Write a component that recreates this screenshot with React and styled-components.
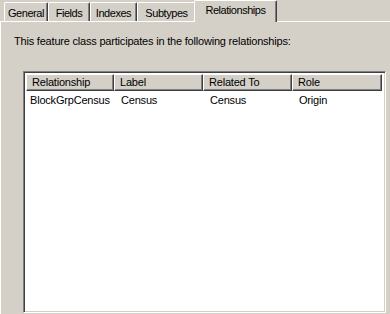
import React from "react";
import styled, { createGlobalStyle } from "styled-components";

const Global = createGlobalStyle`
  html, body { margin: 0; padding: 0; background: #d4d0c8; }
  * { box-sizing: border-box; }
`;

const Root = styled.div`
  width: 390px;
  height: 314px;
  background: #d4d0c8;
  font-family: Tahoma, "Liberation Sans", Arial, sans-serif;
  font-size: 11px;
  letter-spacing: -0.2px;
  color: #000;
  overflow: hidden;
  display: flex;
  flex-direction: column;
`;

const TabStrip = styled.div`
  display: flex;
  align-items: flex-end;
  height: 21px;
  padding-left: 4px;
  position: relative;
  z-index: 1;
`;

const Tab = styled.div`
  width: ${(p) => p.$w}px;
  height: ${(p) => (p.$active ? 22 : 19)}px;
  margin: ${(p) => (p.$active ? "0 -2px -1px -2px" : "0")};
  padding-top: ${(p) => (p.$active ? 3 : 4)}px;
  text-align: center;
  letter-spacing: -0.45px;
  background: #d4d0c8;
  border-top: 1px solid #fff;
  border-left: 1px solid #fff;
  border-right: 1px solid #404040;
  box-shadow: inset -1px 0 0 #808080;
  border-radius: 2px 2px 0 0;
  white-space: nowrap;
  line-height: 13px;
`;

const Panel = styled.div`
  flex: 1;
  border-top: 1px solid #fff;
  border-left: 1px solid #fff;
  padding: 13px 4px 0 13px;
  display: flex;
  flex-direction: column;
`;

const Intro = styled.div`
  line-height: 13px;
`;

const ListView = styled.div`
  margin: 23px 0 0 9px;
  width: 363px;
  height: 242px;
  background: #fff;
  border-top: 1px solid #808080;
  border-left: 1px solid #808080;
  border-right: 1px solid #fff;
  border-bottom: 1px solid #fff;
  box-shadow: inset 1px 1px 0 #404040, inset -1px -1px 0 #d4d0c8;
  padding: 2px;
  display: flex;
  flex-direction: column;
`;

const cols = [88, 89, 89, 90];

const HeaderRow = styled.div`
  display: flex;
  height: 17px;
`;

const HeaderCell = styled.div`
  width: ${(p) => p.$w}px;
  height: 17px;
  background: #d4d0c8;
  border-top: 1px solid #fff;
  border-left: 1px solid #fff;
  border-right: 1px solid #404040;
  border-bottom: 1px solid #404040;
  box-shadow: inset -1px -1px 0 #808080;
  padding: 1px 0 0 5px;
  line-height: 13px;
  white-space: nowrap;
`;

const Row = styled.div`
  display: flex;
  height: 14px;
  margin-top: 2px;
`;

const Cell = styled.div`
  width: ${(p) => p.$w}px;
  padding-left: ${(p) => (p.$first ? 4 : 7)}px;
  line-height: 14px;
  white-space: nowrap;
`;

const tabs = [
  { label: "General", w: 44 },
  { label: "Fields", w: 42 },
  { label: "Indexes", w: 47 },
  { label: "Subtypes", w: 59 },
  { label: "Relationships", w: 83, active: true },
];

const headers = ["Relationship", "Label", "Related To", "Role"];
const rows = [["BlockGrpCensus", "Census", "Census", "Origin"]];

export default function App() {
  return (
    <Root>
      <Global />
      <TabStrip>
        {tabs.map((t) => (
          <Tab key={t.label} $w={t.w} $active={t.active}>
            {t.label}
          </Tab>
        ))}
      </TabStrip>
      <Panel>
        <Intro>This feature class participates in the following relationships:</Intro>
        <ListView>
          <HeaderRow>
            {headers.map((h, i) => (
              <HeaderCell key={h} $w={cols[i]}>
                {h}
              </HeaderCell>
            ))}
          </HeaderRow>
          {rows.map((r, ri) => (
            <Row key={ri}>
              {r.map((c, i) => (
                <Cell key={i} $w={cols[i]} $first={i === 0}>
                  {c}
                </Cell>
              ))}
            </Row>
          ))}
        </ListView>
      </Panel>
    </Root>
  );
}
